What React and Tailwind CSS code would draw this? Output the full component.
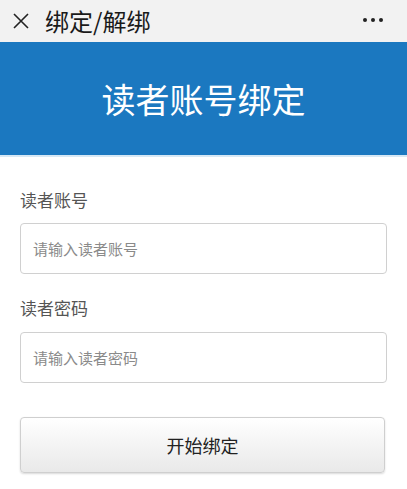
import React from "react";

const font = { fontFamily: '"Noto Sans CJK SC", "Noto Sans", sans-serif' };

export default function App() {
  return (
    <div className="w-[407px] h-[489px] bg-white overflow-hidden" style={font}>
      <div className="h-[42px] bg-[#f2f2f2] flex items-center pl-[13px] pr-[24px]">
        <svg width="16" height="16" viewBox="0 0 16 16" className="shrink-0">
          <path d="M1 1 L15 15 M15 1 L1 15" stroke="#222" strokeWidth="1.6" fill="none" />
        </svg>
        <div className="ml-[16px] text-[24px] leading-none text-[#1a1a1a] -mt-[1px]">绑定/解绑</div>
        <div className="ml-auto flex gap-[4px] -mt-[2px]">
          <span className="w-[4px] h-[4px] rounded-full bg-[#222]"></span>
          <span className="w-[4px] h-[4px] rounded-full bg-[#222]"></span>
          <span className="w-[4px] h-[4px] rounded-full bg-[#222]"></span>
        </div>
      </div>
      <div className="h-[113px] bg-[#1b78c0] flex items-center justify-center">
        <div className="text-[34px] leading-none text-white">读者账号绑定</div>
      </div>
      <div className="h-[2px] bg-[#d6e8f5]"></div>
      <div className="px-[20px] pt-[34px]">
        <div className="text-[17px] leading-none text-[#555]">读者账号</div>
        <div className="mt-[15px] h-[51px] rounded-[4px] border border-[#d0d0d0] flex items-center px-[12px]">
          <span className="text-[15px] leading-none text-[#8a8a8a]">请输入读者账号</span>
        </div>
        <div className="mt-[25px] text-[17px] leading-none text-[#555]">读者密码</div>
        <div className="mt-[16px] h-[51px] rounded-[4px] border border-[#d0d0d0] flex items-center px-[12px]">
          <span className="text-[15px] leading-none text-[#8a8a8a]">请输入读者密码</span>
        </div>
        <div className="mt-[34px] mr-[2px] h-[56px] rounded-[4px] border border-[#cfcfcf] bg-gradient-to-b from-[#ffffff] to-[#e9e9e9] shadow-[0_1px_2px_rgba(0,0,0,0.15)] flex items-center justify-center">
          <span className="text-[18px] leading-none text-[#222]">开始绑定</span>
        </div>
      </div>
    </div>
  );
}
